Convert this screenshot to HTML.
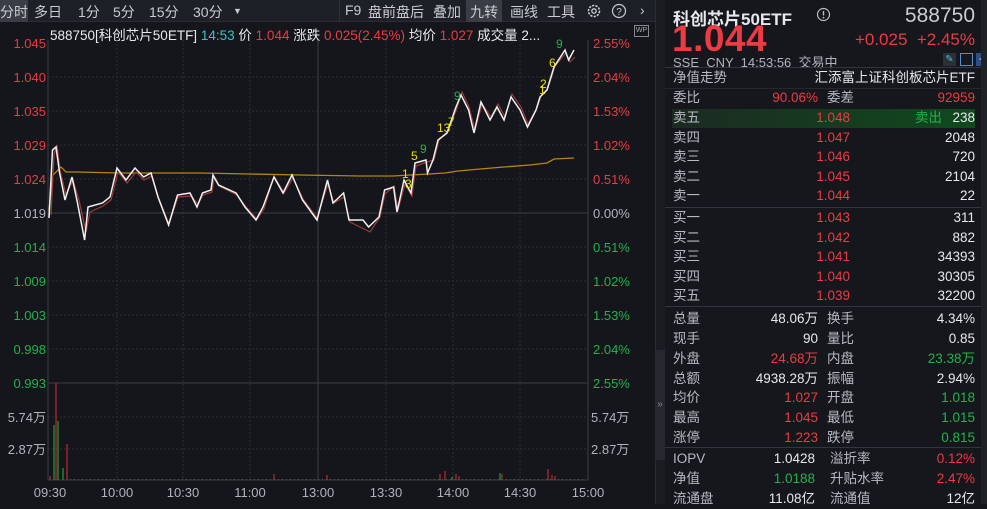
<!DOCTYPE html>
<html><head><meta charset="utf-8"><style>
*{margin:0;padding:0;box-sizing:border-box}
body{width:987px;height:504px;background:#14161b;overflow:hidden;font-family:"Liberation Sans","Noto Sans CJK SC",sans-serif;color:#c4c7cc;position:relative}
.a{position:absolute;white-space:nowrap}
.tb{position:absolute;top:0;left:0;width:655px;height:22px;background:#1d2026;border-bottom:1px solid #2a2d33}
.tb span{position:absolute;top:2px;font-size:14px;color:#c8cbd0}
.r{color:#ec3b42}.g{color:#22b24c}.w{color:#e6e8eb}.gr{color:#b0b4ba}
#rp{position:absolute;left:665px;top:0;width:316px;height:504px;background:#15171c}
.row{position:absolute;left:0;width:316px;height:20px;font-size:13.5px;line-height:20px}
.row .l1{position:absolute;left:8px;color:#b7bbc1}
.row .v1{position:absolute;right:163px;text-align:right}
.row .l2{position:absolute;left:162px;color:#b7bbc1}
.row .v2{position:absolute;right:6px;text-align:right}
.row .p{position:absolute;right:131px}
.hr{position:absolute;left:0;width:316px;height:1px;background:#33363c}
</style></head><body>
<div class="tb">
<div class="a" style="left:0;top:0;width:28px;height:22px;background:#3a3d45"></div>
<span style="left:0">分时</span><span style="left:34px">多日</span><span style="left:78px">1分</span><span style="left:113px">5分</span><span style="left:149px">15分</span><span style="left:193px">30分</span><span style="left:233px;font-size:9px;top:6px">▼</span>
<div class="a" style="left:339px;top:0;width:1px;height:22px;background:#2e3137"></div>
<span style="left:345px">F9</span><span style="left:368px">盘前盘后</span><span style="left:433px">叠加</span>
<div class="a" style="left:466px;top:0;width:36px;height:22px;background:#3a3d45"></div>
<span style="left:470px">九转</span><span style="left:510px">画线</span><span style="left:547px">工具</span>
<svg class="a" style="left:586px;top:3px" width="16" height="16" viewBox="0 0 16 16"><circle cx="8" cy="8" r="5.5" fill="none" stroke="#c8cbd0" stroke-width="1.6" stroke-dasharray="2.2 1.2"/><circle cx="8" cy="8" r="2.2" fill="none" stroke="#c8cbd0" stroke-width="1.3"/></svg>
<svg class="a" style="left:611px;top:3px" width="16" height="16" viewBox="0 0 16 16"><circle cx="8" cy="8" r="6.5" fill="none" stroke="#c8cbd0" stroke-width="1.2"/><text x="8" y="12" font-size="10" fill="#c8cbd0" text-anchor="middle" font-family="Liberation Sans">?</text></svg>
<span style="left:640px">›</span>
</div>
<div class="a" style="left:50px;top:24px;font-size:13.5px"><span class="w">588750[科创芯片50ETF]</span> <span style="color:#2fc6c8">14:53</span> <span class="w">价</span> <span class="r">1.044</span> <span class="w">涨跌</span> <span class="r">0.025(2.45%)</span> <span class="w">均价</span> <span class="r">1.027</span> <span class="w">成交量</span> <span class="w">2...</span></div>
<div class="a" style="left:634px;top:25px;width:15px;height:12px;border:1px solid #888;font-size:7px;color:#aaa;text-align:center;line-height:10px">WP</div>
<svg class="a" style="left:0;top:0" width="655" height="504">
<g stroke="#2b2e34" stroke-width="1" stroke-dasharray="2 2">
<line x1="48" y1="77" x2="588" y2="77"/><line x1="48" y1="111" x2="588" y2="111"/><line x1="48" y1="145" x2="588" y2="145"/><line x1="48" y1="179" x2="588" y2="179"/><line x1="48" y1="247" x2="588" y2="247"/><line x1="48" y1="281" x2="588" y2="281"/><line x1="48" y1="315" x2="588" y2="315"/><line x1="48" y1="349" x2="588" y2="349"/><line x1="48" y1="417" x2="588" y2="417"/><line x1="48" y1="449" x2="588" y2="449"/>
<line x1="117" y1="40" x2="117" y2="480"/><line x1="183" y1="40" x2="183" y2="480"/><line x1="250" y1="40" x2="250" y2="480"/><line x1="386" y1="40" x2="386" y2="480"/><line x1="453" y1="40" x2="453" y2="480"/><line x1="520" y1="40" x2="520" y2="480"/>
</g>
<g stroke="#3a3d43" stroke-width="1" fill="none">
<line x1="48" y1="40" x2="48" y2="480"/><line x1="588" y1="40" x2="588" y2="480"/><line x1="318" y1="40" x2="318" y2="480"/>
<line x1="48" y1="213" x2="588" y2="213"/><line x1="48" y1="383" x2="588" y2="383"/><line x1="48" y1="480" x2="588" y2="480"/>
</g>
<g font-size="13" font-family="Liberation Sans">
<g text-anchor="end">
<text x="46" y="48" fill="#ec3b42">1.045</text><text x="46" y="82" fill="#ec3b42">1.040</text><text x="46" y="116" fill="#ec3b42">1.035</text><text x="46" y="150" fill="#ec3b42">1.029</text><text x="46" y="184" fill="#ec3b42">1.024</text><text x="46" y="218" fill="#b0b4ba">1.019</text><text x="46" y="252" fill="#22b24c">1.014</text><text x="46" y="286" fill="#22b24c">1.009</text><text x="46" y="320" fill="#22b24c">1.003</text><text x="46" y="354" fill="#22b24c">0.998</text><text x="46" y="388" fill="#22b24c">0.993</text>
<text x="46" y="422" fill="#b0b4ba">5.74万</text><text x="46" y="454" fill="#b0b4ba">2.87万</text>
</g>
<text x="593" y="48" fill="#ec3b42">2.55%</text><text x="593" y="82" fill="#ec3b42">2.04%</text><text x="593" y="116" fill="#ec3b42">1.53%</text><text x="593" y="150" fill="#ec3b42">1.02%</text><text x="593" y="184" fill="#ec3b42">0.51%</text><text x="593" y="218" fill="#b0b4ba">0.00%</text><text x="593" y="252" fill="#22b24c">0.51%</text><text x="593" y="286" fill="#22b24c">1.02%</text><text x="593" y="320" fill="#22b24c">1.53%</text><text x="593" y="354" fill="#22b24c">2.04%</text><text x="593" y="388" fill="#22b24c">2.55%</text>
<text x="591" y="422" fill="#b0b4ba">5.74万</text><text x="591" y="454" fill="#b0b4ba">2.87万</text>
<g fill="#b0b4ba" text-anchor="middle"><text x="50" y="497">09:30</text><text x="117" y="497">10:00</text><text x="183" y="497">10:30</text><text x="250" y="497">11:00</text><text x="318" y="497">13:00</text><text x="386" y="497">13:30</text><text x="453" y="497">14:00</text><text x="520" y="497">14:30</text><text x="588" y="497">15:00</text></g>
</g>
<polyline fill="none" stroke="#b8860b" stroke-width="1.3" points="49,210 53,175 61,167 66,172 76,172 120,173 200,173 300,175 360,176 393,176 410,175 429,174 445,173 458,171 480,169 504,167 530,165 547,163 554,159 574,158"/>
<polyline fill="none" stroke="#9a3a3a" stroke-width="1.2" points="51,215 54,155 57,145 60,170 66,195 73,180 79,200 86,232 90,212 103,206 111,200 118,172 127,183 136,172 144,180 152,176 159,199 169,224 178,197 191,196 198,204 203,195 212,192 214,178 219,186 237,195 246,207 257,219 264,209 274,176 284,193 293,178 303,199 317,218 328,184 334,203 344,197 350,222 364,229 370,232 380,217 385,194 394,186 398,210 405,184 412,196 416,166 427,162 434,160 439,140 448,131 457,108 462,92 469,107 475,130 482,104 491,117 498,104 505,117 512,94 521,107 528,124 537,108 541,96 548,88 555,66 566,53 570,62 575,57"/>
<polyline fill="none" stroke="#f0f0f0" stroke-width="1.5" points="49,218 52.5,150 56,147 59.6,173 65,200 72,177 77.5,203 84.6,240 88,207 102.5,203 110,197 117,168 126,180 135,168 143.6,177 151,173 158,197 168.6,225 177.5,195 190,193 197,207 202.5,193 211,190 213,175 218.6,185 236,193 245,207 256,220 263,207 274,177 283,193 292,175 302.5,200 317,220 327.5,180 333,203 343.6,193 349,220 363,220 368.6,227 379,217 384.6,190 393.6,187 397,212 404,180 411,193 415,163 426,160 427.5,173 433,160 438,140 447,133 456,107 461,95 468.6,110 474,133 481,102 490,120 497,107 504,120 511,97 520,110 527.5,127 536,110 540,97 547,90 554,67 565,50 568.6,60 574,50"/>
<g font-size="12" font-family="Liberation Sans">
<text x="402" y="178" fill="#e8e000">1</text><text x="405" y="188" fill="#e8e000">3</text><text x="411" y="160" fill="#e8e000">5</text><text x="420" y="153" fill="#22b24c">9</text><text x="437" y="132" fill="#e8e000">13</text><text x="448" y="126" fill="#e8e000">7</text><text x="454" y="100" fill="#22b24c">9</text><text x="540" y="88" fill="#e8e000">2</text><text x="539" y="94" fill="#e8e000">1</text><text x="549" y="67" fill="#e8e000">6</text><text x="556" y="48" fill="#22b24c">9</text>
</g>
<g stroke-width="1.2">
<line x1="54" y1="480" x2="54" y2="425" stroke="#1fa040"/><line x1="56" y1="480" x2="56" y2="383" stroke="#c0282e"/><line x1="58" y1="480" x2="58" y2="421" stroke="#1fa040"/><line x1="63" y1="480" x2="63" y2="468" stroke="#1fa040"/><line x1="67" y1="480" x2="67" y2="444" stroke="#c0282e"/><line x1="50" y1="480" x2="50" y2="476" stroke="#c0282e"/>
<line x1="274" y1="480" x2="274" y2="474" stroke="#c0282e"/><line x1="327" y1="480" x2="327" y2="475" stroke="#c0282e"/><line x1="440" y1="480" x2="440" y2="474" stroke="#c0282e"/><line x1="445" y1="480" x2="445" y2="471" stroke="#c0282e"/><line x1="452" y1="480" x2="452" y2="477" stroke="#1fa040"/><line x1="456" y1="480" x2="456" y2="474" stroke="#c0282e"/><line x1="459" y1="480" x2="459" y2="476" stroke="#c0282e"/><line x1="500" y1="480" x2="500" y2="473" stroke="#1fa040"/><line x1="502" y1="480" x2="502" y2="474" stroke="#c0282e"/><line x1="548" y1="480" x2="548" y2="469" stroke="#c0282e"/><line x1="552" y1="480" x2="552" y2="475" stroke="#c0282e"/><line x1="555" y1="480" x2="555" y2="476" stroke="#c0282e"/>
</g>
<path d="M70 479.5H585" stroke="#555" stroke-width="1" stroke-dasharray="1 3"/>
</svg>
<div class="a" style="left:655px;top:0;width:10px;height:504px;background:#1a1c21;border-left:1px solid #2a2d33"></div>
<div class="a" style="left:655px;top:350px;width:10px;height:110px;background:#25282e;font-size:10px;color:#888;line-height:110px;text-align:center">»</div>
<div id="rp">
<div class="a w" style="left:8px;top:5px;font-size:17px;font-weight:bold">科创芯片50ETF</div>
<svg class="a" style="left:151px;top:7px" width="15" height="15"><circle cx="7.5" cy="7.5" r="6" fill="none" stroke="#bbb" stroke-width="1.2"/><line x1="7.5" y1="4" x2="7.5" y2="8.5" stroke="#bbb" stroke-width="1.4"/><circle cx="7.5" cy="10.6" r="0.9" fill="#bbb"/></svg>
<div class="a gr" style="right:6px;top:4px;font-size:21px;color:#c9ccd1">588750</div>
<div class="a r" style="left:7px;top:18px;font-size:37px;font-weight:bold;letter-spacing:0.5px">1.044</div>
<div class="a r" style="right:6px;top:30px;font-size:17px">+0.025 &nbsp;+2.45%</div>
<div class="a gr" style="left:8px;top:52px;font-size:13px">SSE &nbsp;CNY &nbsp;14:53:56 &nbsp;交易中</div>
<div class="a" style="left:278px;top:53px;width:13px;height:13px;background:#2b2f36;color:#4fb8e0;font-size:10px;text-align:center;line-height:13px">✎</div>
<div class="a" style="left:295px;top:53px;width:13px;height:13px;border:1px solid #4f8fd0;"></div>
<div class="a" style="left:311px;top:53px;width:13px;height:13px;background:#2b4f86;color:#fff;font-size:12px;text-align:center;line-height:13px">+</div>
<div class="hr" style="top:67px"></div>
<div class="row" style="top:68px"><span class="l1">净值走势</span><span class="v2 w">汇添富上证科创板芯片ETF</span></div>
<div class="hr" style="top:88px;background:#25282d"></div>
<div class="row" style="top:88px"><span class="l1">委比</span><span class="v1 r">90.06%</span><span class="l2">委差</span><span class="v2 r">92959</span></div>
<div class="a" style="left:7px;top:109px;width:303px;height:19px;background:linear-gradient(90deg,#1d2a22,#0f4a1e)"></div>
<div class="row" style="top:108px"><span class="l1">卖五</span><span class="p r">1.048</span><span class="a g" style="left:250px">卖出</span><span class="v2 w">238</span></div>
<div class="row" style="top:128px"><span class="l1">卖四</span><span class="p r">1.047</span><span class="v2 w">2048</span></div>
<div class="row" style="top:147px"><span class="l1">卖三</span><span class="p r">1.046</span><span class="v2 w">720</span></div>
<div class="row" style="top:167px"><span class="l1">卖二</span><span class="p r">1.045</span><span class="v2 w">2104</span></div>
<div class="row" style="top:186px"><span class="l1">卖一</span><span class="p r">1.044</span><span class="v2 w">22</span></div>
<div class="hr" style="top:207px"></div>
<div class="row" style="top:208px"><span class="l1">买一</span><span class="p r">1.043</span><span class="v2 w">311</span></div>
<div class="row" style="top:228px"><span class="l1">买二</span><span class="p r">1.042</span><span class="v2 w">882</span></div>
<div class="row" style="top:247px"><span class="l1">买三</span><span class="p r">1.041</span><span class="v2 w">34393</span></div>
<div class="row" style="top:267px"><span class="l1">买四</span><span class="p r">1.040</span><span class="v2 w">30305</span></div>
<div class="row" style="top:286px"><span class="l1">买五</span><span class="p r">1.039</span><span class="v2 w">32200</span></div>
<div class="hr" style="top:306px"></div>
<div class="row" style="top:309px"><span class="l1">总量</span><span class="v1 w">48.06万</span><span class="l2">换手</span><span class="v2 w">4.34%</span></div>
<div class="row" style="top:329px"><span class="l1">现手</span><span class="v1 w">90</span><span class="l2">量比</span><span class="v2 w">0.85</span></div>
<div class="row" style="top:349px"><span class="l1">外盘</span><span class="v1 r">24.68万</span><span class="l2">内盘</span><span class="v2 g">23.38万</span></div>
<div class="row" style="top:369px"><span class="l1">总额</span><span class="v1 w">4938.28万</span><span class="l2">振幅</span><span class="v2 w">2.94%</span></div>
<div class="row" style="top:388px"><span class="l1">均价</span><span class="v1 r">1.027</span><span class="l2">开盘</span><span class="v2 g">1.018</span></div>
<div class="row" style="top:408px"><span class="l1">最高</span><span class="v1 r">1.045</span><span class="l2">最低</span><span class="v2 g">1.015</span></div>
<div class="row" style="top:428px"><span class="l1">涨停</span><span class="v1 r">1.223</span><span class="l2">跌停</span><span class="v2 g">0.815</span></div>
<div class="hr" style="top:447px"></div>
<div class="row" style="top:449px"><span class="l1">IOPV</span><span class="v1 w" style="right:166px">1.0428</span><span class="l2" style="left:165px">溢折率</span><span class="v2 r">0.12%</span></div>
<div class="row" style="top:469px"><span class="l1">净值</span><span class="v1 g" style="right:166px">1.0188</span><span class="l2" style="left:165px">升贴水率</span><span class="v2 r">2.47%</span></div>
<div class="row" style="top:489px"><span class="l1">流通盘</span><span class="v1 w" style="right:166px">11.08亿</span><span class="l2" style="left:165px">流通值</span><span class="v2 w">12亿</span></div>
</div>
<div class="a" style="left:981px;top:0;width:6px;height:504px;background:#1f2227"></div>
</body></html>
